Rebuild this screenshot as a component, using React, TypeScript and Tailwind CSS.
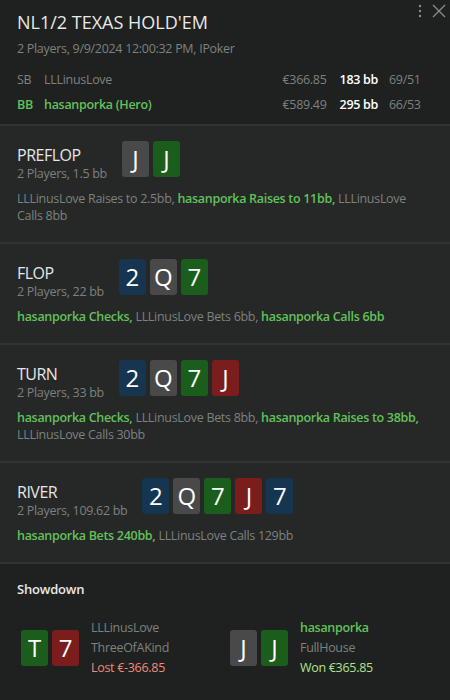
type Card = { r: string; s: "c" | "d" | "h" | "s" };
type Action = { text: string; hero?: boolean };
type Street = { name: string; info: string; cards: Card[]; actions: Action[] };

const suitBg: Record<Card["s"], string> = {
  c: "bg-[#1b5e1b]",
  d: "bg-[#153550]",
  h: "bg-[#7b1d1d]",
  s: "bg-[#494949]",
};

const streets: Street[] = [
  {
    name: "PREFLOP",
    info: "2 Players, 1.5 bb",
    cards: [{ r: "J", s: "s" }, { r: "J", s: "c" }],
    actions: [
      { text: "LLLinusLove Raises to 2.5bb" },
      { text: "hasanporka Raises to 11bb", hero: true },
      { text: "LLLinusLove Calls 8bb" },
    ],
  },
  {
    name: "FLOP",
    info: "2 Players, 22 bb",
    cards: [{ r: "2", s: "d" }, { r: "Q", s: "s" }, { r: "7", s: "c" }],
    actions: [
      { text: "hasanporka Checks", hero: true },
      { text: "LLLinusLove Bets 6bb" },
      { text: "hasanporka Calls 6bb", hero: true },
    ],
  },
  {
    name: "TURN",
    info: "2 Players, 33 bb",
    cards: [{ r: "2", s: "d" }, { r: "Q", s: "s" }, { r: "7", s: "c" }, { r: "J", s: "h" }],
    actions: [
      { text: "hasanporka Checks", hero: true },
      { text: "LLLinusLove Bets 8bb" },
      { text: "hasanporka Raises to 38bb", hero: true },
      { text: "LLLinusLove Calls 30bb" },
    ],
  },
  {
    name: "RIVER",
    info: "2 Players, 109.62 bb",
    cards: [
      { r: "2", s: "d" },
      { r: "Q", s: "s" },
      { r: "7", s: "c" },
      { r: "J", s: "h" },
      { r: "7", s: "d" },
    ],
    actions: [
      { text: "hasanporka Bets 240bb", hero: true },
      { text: "LLLinusLove Calls 129bb" },
    ],
  },
];

function PlayingCard({ c }: { c: Card }) {
  return (
    <div
      className={`${suitBg[c.s]} w-[27px] h-[36px] rounded-[3px] flex items-center justify-center text-white text-[24px] leading-none`}
    >
      {c.r}
    </div>
  );
}

function Cards({ cards }: { cards: Card[] }) {
  return (
    <div className="flex gap-[4px]">
      {cards.map((c, i) => (
        <PlayingCard key={i} c={c} />
      ))}
    </div>
  );
}

function StreetBlock({ st }: { st: Street }) {
  return (
    <div className="bg-[#252827] border-b-2 border-[#2f3331] px-[17px] pt-[15px] pb-[18px]">
      <div className="flex items-start gap-[15px]">
        <div className="flex flex-col">
          <span className="text-[16px] leading-[20px] tracking-[-0.5px] text-[#e6e6e6] mt-[4px]">{st.name}</span>
          <span className="text-[12.5px] leading-[16px] tracking-[-0.3px] text-[#7d817f] mt-[1px]">{st.info}</span>
        </div>
        <Cards cards={st.cards} />
      </div>
      <p className="mt-[8px] text-[12.5px] leading-[17px] tracking-[-0.3px] text-[#7d817f]">
        {st.actions.map((a, i) => (
          <span key={i} className={a.hero ? "text-[#63c05a] font-semibold" : ""}>
            {a.text}
            {i < st.actions.length - 1 ? ", " : ""}
          </span>
        ))}
      </p>
    </div>
  );
}

export default function App() {
  return (
    <div
      className="w-[450px] h-[700px] overflow-hidden bg-[#1e211f] flex flex-col"
      style={{ fontFamily: '"Open Sans", "Noto Sans", sans-serif' }}
    >
      <div className="relative bg-[#1e211f] border-b-2 border-[#2f3331] px-[17px] pt-[10px] pb-[11px]">
        <div className="absolute top-[4px] right-[4px] flex items-center gap-[10px] text-[#8a8d8b]">
          <svg width="4" height="14" viewBox="0 0 4 14" fill="currentColor">
            <circle cx="2" cy="2" r="1.2" />
            <circle cx="2" cy="7" r="1.2" />
            <circle cx="2" cy="12" r="1.2" />
          </svg>
          <svg width="14" height="14" viewBox="0 0 14 14" stroke="currentColor" strokeWidth="1.3">
            <path d="M1 1 L13 13 M13 1 L1 13" />
          </svg>
        </div>
        <h1 className="text-[18px] leading-[24px] text-[#e8e8e8]">NL1/2 TEXAS HOLD'EM</h1>
        <p className="mt-[7px] text-[12.5px] leading-[16px] tracking-[-0.3px] text-[#7d817f]">
          2 Players, 9/9/2024 12:00:32 PM, IPoker
        </p>
        <div className="mt-[14px] mr-[12px] flex flex-col gap-[8px] text-[12.5px] leading-[17px] tracking-[-0.3px]">
          <div className="flex items-center">
            <span className="w-[27px] text-[#7d817f]">SB</span>
            <span className="flex-1 text-[#7d817f]">LLLinusLove</span>
            <span className="text-[#7d817f]">€366.85</span>
            <span className="ml-[13px] font-semibold text-white">183 bb</span>
            <span className="ml-[11px] w-[32px] text-[#7d817f]">69/51</span>
          </div>
          <div className="flex items-center">
            <span className="w-[27px] text-[#63c05a] font-semibold">BB</span>
            <span className="flex-1 text-[#63c05a] font-semibold">hasanporka (Hero)</span>
            <span className="text-[#7d817f]">€589.49</span>
            <span className="ml-[13px] font-semibold text-white">295 bb</span>
            <span className="ml-[11px] w-[32px] text-[#7d817f]">66/53</span>
          </div>
        </div>
      </div>

      {streets.map((st) => (
        <StreetBlock key={st.name} st={st} />
      ))}

      <div className="flex-1 bg-[#1e211f] px-[17px] pt-[16px]">
        <h2 className="text-[13px] leading-[18px] tracking-[-0.2px] text-[#e8e8e8] font-semibold">Showdown</h2>
        <div className="mt-[20px] flex">
          <div className="w-[213px] flex items-center gap-[12px] pl-[4px]">
            <Cards cards={[{ r: "T", s: "c" }, { r: "7", s: "h" }]} />
            <div className="flex flex-col text-[12.5px] leading-[20px] tracking-[-0.3px]">
              <span className="text-[#7d817f]">LLLinusLove</span>
              <span className="text-[#7d817f]">ThreeOfAKind</span>
              <span className="text-[#ee8a7c]">Lost €-366.85</span>
            </div>
          </div>
          <div className="flex items-center gap-[12px]">
            <Cards cards={[{ r: "J", s: "s" }, { r: "J", s: "c" }]} />
            <div className="flex flex-col text-[12.5px] leading-[20px] tracking-[-0.3px]">
              <span className="text-[#63c05a] font-semibold">hasanporka</span>
              <span className="text-[#7d817f]">FullHouse</span>
              <span className="text-[#b2e28d]">Won €365.85</span>
            </div>
          </div>
        </div>
      </div>
    </div>
  );
}
